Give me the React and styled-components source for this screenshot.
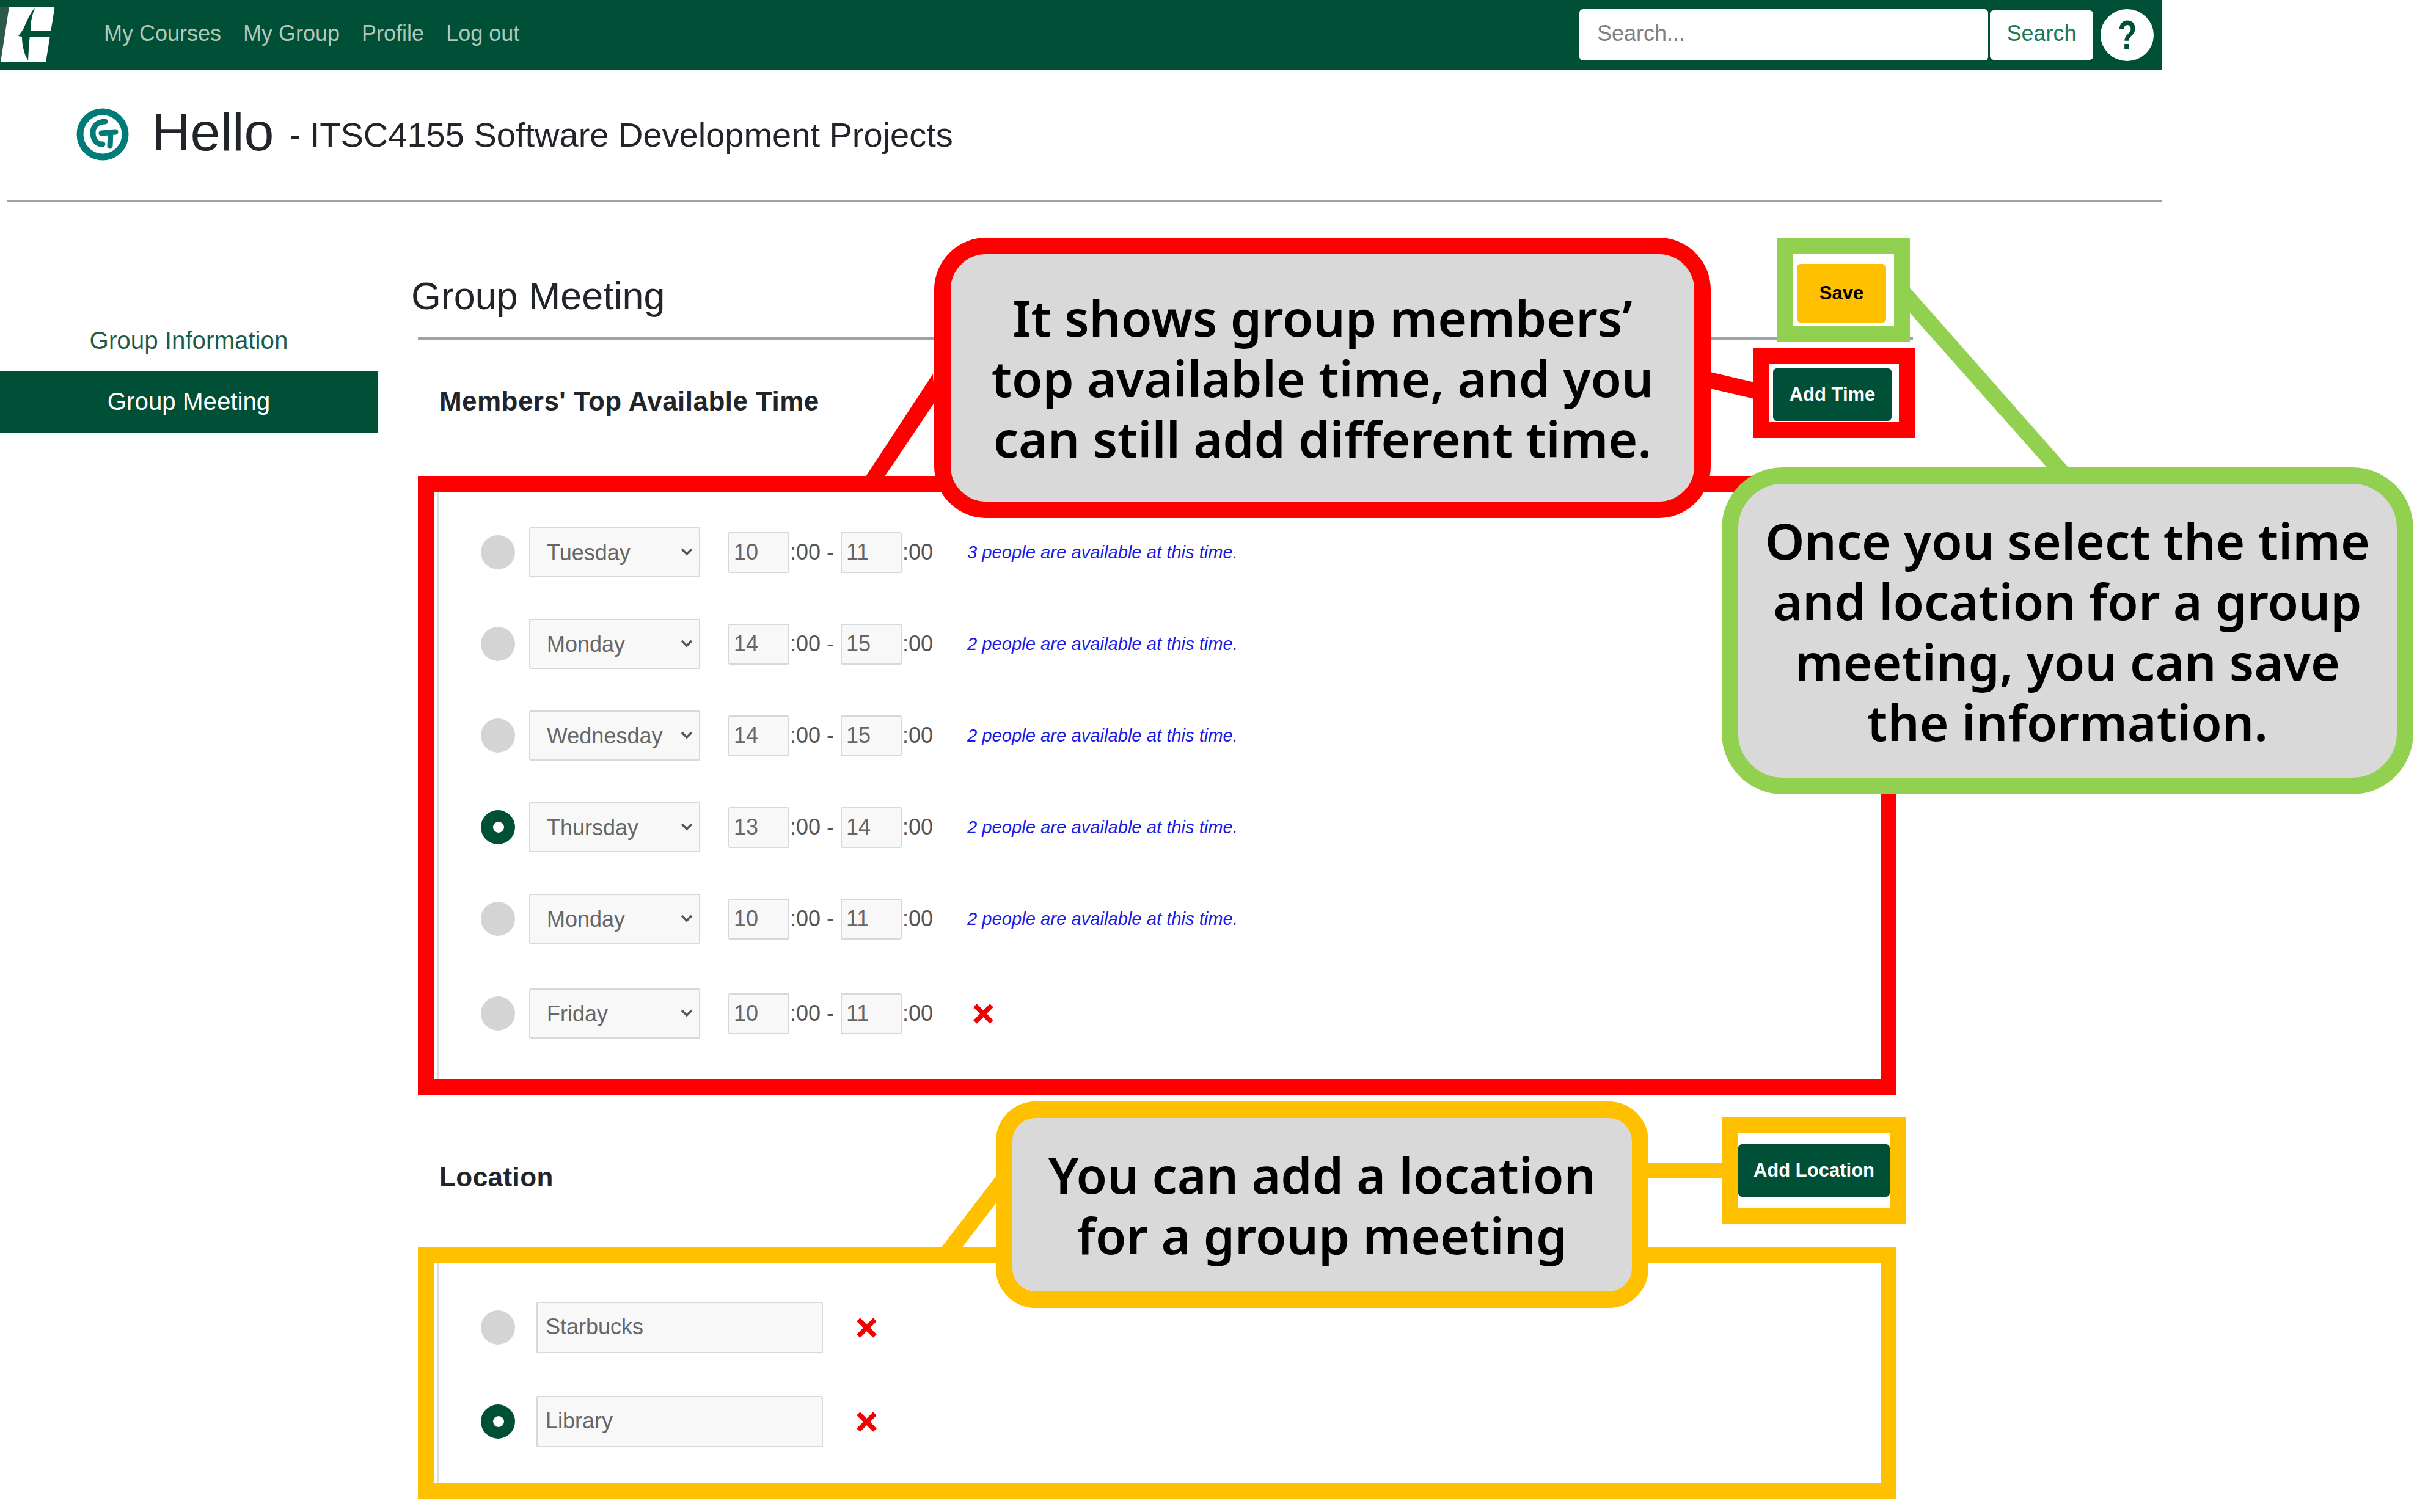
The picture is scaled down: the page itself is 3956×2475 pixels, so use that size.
import React from "react";
import styled, { createGlobalStyle } from "styled-components";

const GREEN = "#004f37";
const RED = "#ff0000";
const LIME = "#92d050";
const AMBER = "#ffc000";

const timeSlots = [
  { day: "Tuesday", from: "10", to: "11", note: "3 people are available at this time." },
  { day: "Monday", from: "14", to: "15", note: "2 people are available at this time." },
  { day: "Wednesday", from: "14", to: "15", note: "2 people are available at this time." },
  { day: "Thursday", from: "13", to: "14", note: "2 people are available at this time.", selected: true },
  { day: "Monday", from: "10", to: "11", note: "2 people are available at this time." },
  { day: "Friday", from: "10", to: "11", removable: true },
];

const days = ["Monday", "Tuesday", "Wednesday", "Thursday", "Friday"];

const GlobalStyle = createGlobalStyle`
  html, body {
    margin: 0;
    background: #fff;
    font-family: "Liberation Sans", Arial, sans-serif;
  }
`;

const Page = styled.div`
  position: relative;
  width: 3956px;
  height: 2475px;
  overflow: hidden;
  background: #fff;
`;

const TopBar = styled.nav`
  display: flex;
  align-items: center;
  width: 3538px;
  height: 114px;
  padding-right: 13px;
  box-sizing: border-box;
  background: ${GREEN};
`;

const NavLinks = styled.div`
  display: flex;
  gap: 36px;
  margin-left: 80px;
  margin-top: -4px;
`;

const NavLink = styled.a`
  font-size: 36px;
  color: #b0c8ba;
`;

const SearchInput = styled.input`
  width: 669px;
  height: 84px;
  margin-left: auto;
  padding: 0 29px 4px;
  box-sizing: border-box;
  border: 0;
  border-radius: 6px;
  font: 36px "Liberation Sans", Arial, sans-serif;
  background: #fff;
  &::placeholder {
    color: #808080;
  }
`;

const SearchButton = styled.button`
  width: 169px;
  height: 81px;
  margin-left: 3px;
  padding: 0 0 4px;
  border: 0;
  border-radius: 6px;
  background: #fff;
  color: #1c7a58;
  font: 36px "Liberation Sans", Arial, sans-serif;
`;

const HelpBadge = styled.div`
  display: flex;
  align-items: center;
  justify-content: center;
  width: 87px;
  height: 85px;
  margin-left: 12px;
  border-radius: 50%;
  background: #fff;
`;

const HelpMark = styled.span`
  color: ${GREEN};
  font-size: 68px;
  font-weight: 700;
  transform: scaleX(0.75);
`;

const CourseHeader = styled.header`
  display: flex;
  align-items: center;
  width: 3527px;
  height: 217px;
  margin-left: 11px;
  padding-left: 99px;
  box-sizing: border-box;
  border-bottom: 4px solid #9aa5ab;
`;

const Hello = styled.h1`
  margin: 0 0 9px 23px;
  font-size: 88px;
  font-weight: 400;
  color: #212529;
`;

const CourseName = styled.span`
  margin-left: 25px;
  font-size: 56px;
  color: #212529;
`;

const Body = styled.div`
  display: flex;
`;

const Sidebar = styled.aside`
  width: 618px;
  padding-top: 177px;
`;

const SideItem = styled.div`
  display: flex;
  align-items: center;
  justify-content: center;
  height: 100px;
  padding-bottom: 1px;
  box-sizing: border-box;
  font-size: 40.3px;
  color: ${(p) => (p.$active ? "#fff" : "#1f5c48")};
  background: ${(p) => (p.$active ? GREEN : "transparent")};
`;

const Main = styled.main`
  width: 2447px;
  margin-left: 66px;
`;

const TitleRow = styled.div`
  display: flex;
  align-items: center;
  justify-content: space-between;
  padding: 101px 44px 24px 0;
  border-bottom: 4px solid #9aa5ab;
`;

const Title = styled.h2`
  margin: 8px 0 0 -11px;
  font-size: 62.8px;
  font-weight: 400;
  color: #212529;
`;

const SectionRow = styled.div`
  display: flex;
  align-items: flex-start;
  justify-content: space-between;
  height: ${(p) => p.$height}px;
  padding: ${(p) => p.$top}px ${(p) => p.$right}px 0 35px;
  box-sizing: border-box;
`;

const SectionTitle = styled.h3`
  margin: 11px 0 0;
  font-size: 44px;
  line-height: 86px;
  letter-spacing: 0.45px;
  font-weight: 700;
  color: #212529;
`;

const Marked = styled.div`
  position: relative;
  isolation: isolate;
`;

const Highlight = styled.div`
  position: absolute;
  z-index: -1;
  inset: ${(p) => p.$inset};
  border: 26px solid ${(p) => p.$color};
  background: #fff;
`;

const ActionButton = styled.button`
  display: block;
  width: ${(p) => p.$width}px;
  height: ${(p) => p.$height}px;
  border: 0;
  border-radius: 6px;
  padding: 0;
  background: ${(p) => p.$bg};
  color: ${(p) => p.$fg};
  font: 700 31px "Liberation Sans", Arial, sans-serif;
`;

const Frame = styled.section`
  width: 2420px;
  height: ${(p) => p.$height}px;
  box-sizing: border-box;
  border: 26px solid ${(p) => p.$color};
`;

const FrameBody = styled.div`
  height: 100%;
  box-sizing: border-box;
  margin-left: 5px;
  padding: ${(p) => p.$top}px 0 0 69px;
  border-left: 3px solid #dcdcdc;
`;

const Row = styled.div`
  display: flex;
  align-items: center;
  height: ${(p) => p.$height}px;
`;

const Radio = styled.span`
  position: relative;
  flex: none;
  width: 56px;
  height: 56px;
  border-radius: 50%;
  background: ${(p) => (p.$on ? GREEN : "#d4d4d4")};
  ${(p) =>
    p.$on &&
    `&::after {
      content: "";
      position: absolute;
      left: 20px;
      top: 19px;
      width: 18px;
      height: 18px;
      border-radius: 50%;
      background: #fff;
    }`}
`;

const SelectBox = styled.div`
  position: relative;
  width: 280px;
  height: 82px;
  margin: 0 46px 0 23px;
`;

const DaySelect = styled.select`
  width: 100%;
  height: 100%;
  padding-left: 27px;
  box-sizing: border-box;
  appearance: none;
  border: 2px solid #d8d8d8;
  border-radius: 3px;
  background: #f8f8f8;
  color: #666;
  font: 36px "Liberation Sans", Arial, sans-serif;
`;

const Chevron = styled.svg`
  position: absolute;
  right: 12px;
  top: 33px;
  width: 20px;
  height: 14px;
  pointer-events: none;
`;

const HourInput = styled.input`
  width: 100px;
  height: 67px;
  padding: 0 0 0 7px;
  box-sizing: border-box;
  border: 2px solid #d8d8d8;
  border-radius: 3px;
  background: #f8f8f8;
  color: #666;
  font: 36px "Liberation Sans", Arial, sans-serif;
`;

const TimeText = styled.span`
  width: ${(p) => p.$width}px;
  padding-left: 1px;
  box-sizing: border-box;
  font-size: 36px;
  color: #555;
  white-space: pre;
`;

const Note = styled.span`
  margin-left: 53px;
  font-size: 29.2px;
  font-style: italic;
  color: #1a1ae6;
`;

const PlaceInput = styled.input`
  width: 469px;
  height: 84px;
  margin-left: 35px;
  padding: 0 0 2px 13px;
  box-sizing: border-box;
  border: 2px solid #d8d8d8;
  border-radius: 3px;
  background: #f8f8f8;
  color: #666;
  font: 36px "Liberation Sans", Arial, sans-serif;
`;

const RemoveIcon = styled.svg`
  flex: none;
  width: 37px;
  height: 33px;
  margin-left: ${(p) => p.$left}px;
`;

const Connectors = styled.svg`
  position: absolute;
  left: 0;
  top: 0;
  width: 3956px;
  height: 2475px;
  pointer-events: none;
`;

const Callout = styled.div`
  position: absolute;
  left: ${(p) => p.$left}px;
  top: ${(p) => p.$top}px;
  width: ${(p) => p.$width}px;
  height: ${(p) => p.$height}px;
  display: flex;
  align-items: center;
  justify-content: center;
  box-sizing: border-box;
  border: 27px solid ${(p) => p.$color};
  border-radius: ${(p) => p.$radius}px;
  background: #d9d9d9;
  color: #000;
  font-family: "Noto Sans", "Open Sans", sans-serif;
  font-size: 82px;
  font-weight: 600;
  line-height: 99px;
  text-align: center;
  white-space: pre;
`;

function RemoveMark({ left }) {
  return (
    <RemoveIcon $left={left} viewBox="0 0 37 33">
      <path d="M5 3 L32 30 M32 3 L5 30" stroke="#f00000" strokeWidth="8" fill="none" />
    </RemoveIcon>
  );
}

function TimeRow({ slot, height }) {
  return (
    <Row $height={height}>
      <Radio $on={slot.selected} />
      <SelectBox>
        <DaySelect defaultValue={slot.day}>
          {days.map((d) => (
            <option key={d}>{d}</option>
          ))}
        </DaySelect>
        <Chevron viewBox="0 0 20 14">
          <path d="M2 3 L10 11 L18 3" stroke="#555" strokeWidth="3.5" fill="none" />
        </Chevron>
      </SelectBox>
      <HourInput defaultValue={slot.from} />
      <TimeText $width={84}>:00 - </TimeText>
      <HourInput defaultValue={slot.to} />
      <TimeText $width={54}>:00</TimeText>
      {slot.note && <Note>{slot.note}</Note>}
      {slot.removable && <RemoveMark left={61} />}
    </Row>
  );
}

export default function App() {
  return (
    <Page>
      <GlobalStyle />
      <TopBar>
        <svg width="90" height="114" viewBox="0 0 90 114">
          <rect x="0" y="11" width="14" height="91" fill="#2d5a48" />
          <path d="M15 11 L86 11 Q90 11 89 15 L75 102 L1 102 Z" fill="#fff" />
          <path
            d="M58 12 C48 22 42 40 38 48 L30 59 L36 60 C36 75 40 90 46 99 C47 85 47 70 49 60 L82 60 L84 50 L50 50 C50 35 53 22 58 12 Z"
            fill={GREEN}
          />
        </svg>
        <NavLinks>
          <NavLink>My Courses</NavLink>
          <NavLink>My Group</NavLink>
          <NavLink>Profile</NavLink>
          <NavLink>Log out</NavLink>
        </NavLinks>
        <SearchInput placeholder="Search..." />
        <SearchButton>Search</SearchButton>
        <HelpBadge>
          <HelpMark>?</HelpMark>
        </HelpBadge>
      </TopBar>

      <CourseHeader>
        <svg width="115" height="115" viewBox="0 0 115 115">
          <circle cx="58" cy="57" r="37" fill="none" stroke="#007b78" strokeWidth="11" />
          <path
            d="M62 36 C49 36 42 44 42 54 C42 67 50 74 58 73 M56 55 L79 53 M71 54 L70 76"
            fill="none"
            stroke="#007b78"
            strokeWidth="9"
            strokeLinecap="round"
          />
        </svg>
        <Hello>Hello</Hello>
        <CourseName>- ITSC4155 Software Development Projects</CourseName>
      </CourseHeader>

      <Body>
        <Sidebar>
          <SideItem>Group Information</SideItem>
          <SideItem $active>Group Meeting</SideItem>
        </Sidebar>

        <Main>
          <TitleRow>
            <Title>Group Meeting</Title>
            <Marked>
              <Highlight $color={LIME} $inset="-43px -39px -32px -32px" />
              <ActionButton $width={146} $height={96} $bg={AMBER} $fg="#000">
                Save
              </ActionButton>
            </Marked>
          </TitleRow>

          <SectionRow $height={223} $top={47} $right={35}>
            <SectionTitle>Members' Top Available Time</SectionTitle>
            <Marked>
              <Highlight $color={RED} $inset="-33px -38px -28px -32px" />
              <ActionButton $width={194} $height={86} $bg={GREEN} $fg="#fff">
                Add Time
              </ActionButton>
            </Marked>
          </SectionRow>

          <Frame $color={RED} $height={1014}>
            <FrameBody $top={24}>
              {timeSlots.map((slot, i) => (
                <TimeRow key={i} slot={slot} height={i === 5 ? 160 : 150} />
              ))}
            </FrameBody>
          </Frame>

          <SectionRow $height={249} $top={80} $right={38}>
            <SectionTitle>Location</SectionTitle>
            <Marked>
              <Highlight $color={AMBER} $inset="-44px -26px -45px -27px" />
              <ActionButton $width={248} $height={86} $bg={GREEN} $fg="#fff">
                Add Location
              </ActionButton>
            </Marked>
          </SectionRow>

          <Frame $color={AMBER} $height={412}>
            <FrameBody $top={28}>
              <Row $height={154}>
                <Radio />
                <PlaceInput defaultValue="Starbucks" />
                <RemoveMark left={53} />
              </Row>
              <Row $height={154}>
                <Radio $on />
                <PlaceInput defaultValue="Library" />
                <RemoveMark left={53} />
              </Row>
            </FrameBody>
          </Frame>
        </Main>
      </Body>

      <Connectors viewBox="0 0 3956 2475">
        <polygon points="1527,612 1417,780 1448,780 1530,658" fill={RED} />
        <polygon points="2795,608 2872,626 2872,653 2795,635" fill={RED} />
        <polygon points="3124,469 3387,767 3352,767 3124,510" fill={LIME} />
        <polygon points="1632,1923 1540,2043 1574,2043 1632,1967" fill={AMBER} />
        <rect x="2695" y="1903" width="125" height="26" fill={AMBER} />
      </Connectors>

      <Callout $left={1529} $top={389} $width={1271} $height={459} $color={RED} $radius={85}>
        {"It shows group members’\ntop available time, and you\ncan still add different time."}
      </Callout>
      <Callout $left={1630} $top={1803} $width={1068} $height={338} $color={AMBER} $radius={65}>
        {"You can add a location\nfor a group meeting"}
      </Callout>
      <Callout $left={2818} $top={765} $width={1132} $height={535} $color={LIME} $radius={100}>
        {"Once you select the time\nand location for a group\nmeeting, you can save\nthe information."}
      </Callout>
    </Page>
  );
}
